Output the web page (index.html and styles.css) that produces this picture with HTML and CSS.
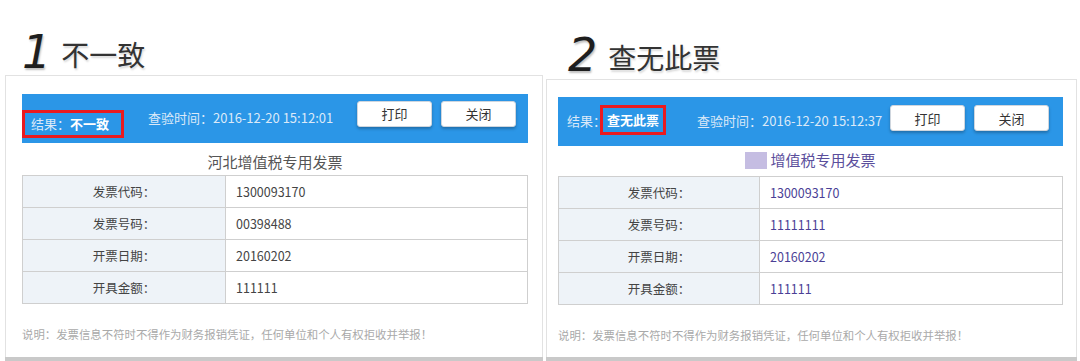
FILE: index.html
```html
<!DOCTYPE html>
<html lang="zh-CN">

<head>
    <meta charset="UTF-8" />
    <meta name="viewport" content="width=device-width, initial-scale=1.0" />
    <title>发票查验结果</title>
    <link rel="stylesheet" href="styles.css">
</head>

<body>
    <div class="page">
        <div class="panel panel-one">
            <div class="title">
                <span class="num">1</span>
                <span class="label">不一致</span>
            </div>
            <div class="card">
                <div class="bar">
                    <div class="result boxed">结果：<b>不一致</b></div>
                    <div class="time">查验时间：2016-12-20 15:12:01</div>
                    <div class="buttons">
                        <button class="btn">打印</button>
                        <button class="btn">关闭</button>
                    </div>
                </div>
                <div class="subtitle">河北增值税专用发票</div>
                <table class="info">
                    <tr><td class="key">发票代码：</td><td>1300093170</td></tr>
                    <tr><td class="key">发票号码：</td><td>00398488</td></tr>
                    <tr><td class="key">开票日期：</td><td>20160202</td></tr>
                    <tr><td class="key">开具金额：</td><td>111111</td></tr>
                </table>
                <p class="note">说明：发票信息不符时不得作为财务报销凭证，任何单位和个人有权拒收并举报！</p>
            </div>
        </div>

        <div class="panel panel-two">
            <div class="title">
                <span class="num">2</span>
                <span class="label">查无此票</span>
            </div>
            <div class="card">
                <div class="bar">
                    <div class="result">结果：<b class="boxed">查无此票</b></div>
                    <div class="time">查验时间：2016-12-20 15:12:37</div>
                    <div class="buttons">
                        <button class="btn">打印</button>
                        <button class="btn">关闭</button>
                    </div>
                </div>
                <div class="subtitle"><span class="mask"></span>增值税专用发票</div>
                <table class="info">
                    <tr><td class="key">发票代码：</td><td>1300093170</td></tr>
                    <tr><td class="key">发票号码：</td><td>11111111</td></tr>
                    <tr><td class="key">开票日期：</td><td>20160202</td></tr>
                    <tr><td class="key">开具金额：</td><td>111111</td></tr>
                </table>
                <p class="note">说明：发票信息不符时不得作为财务报销凭证，任何单位和个人有权拒收并举报！</p>
            </div>
        </div>
    </div>
</body>

</html>
```

FILE: styles.css
```css
body {
    font-family: 'Noto Sans CJK SC', 'Liberation Sans', sans-serif;
    background-color: #ffffff;
    margin: 0;
    padding: 0;
    color: #333;
}

.page {
    display: flex;
    height: 361px;
    overflow: hidden;
}

.panel {
    display: flex;
    flex-direction: column;
}

.panel-one {
    width: 538px;
    margin-left: 5px;
}

.panel-two {
    width: 531px;
    margin-left: 3px;
}

.title {
    display: flex;
    align-items: center;
    gap: 10px;
    height: 75px;
    padding-left: 17px;
    padding-top: 28px;
    box-sizing: border-box;
}

.panel-two .title {
    height: 79px;
    padding-left: 22px;
    padding-top: 30px;
    gap: 11px;
}

.title .num {
    font-family: 'DejaVu Sans', sans-serif;
    font-size: 46px;
    font-style: italic;
    color: #1e1e1e;
    line-height: 1;
    text-shadow: 1px 2px 2px rgba(0, 0, 0, 0.25);
}

.title .label {
    font-size: 28px;
    color: #333;
    line-height: 1;
    margin-top: 4px;
    text-shadow: 1px 2px 2px rgba(0, 0, 0, 0.15);
}

.card {
    flex: 1;
    background-color: white;
    border: 1px solid #e2e2e2;
    border-bottom: none;
    box-shadow: 0 4px 0 #c9c9c9;
    margin-bottom: 4px;
    padding: 18px 14px 0 16px;
}

.panel-two .card {
    padding: 17px 13px 0 11px;
}

.bar {
    display: flex;
    align-items: center;
    height: 49px;
    background-color: #2b96e7;
    padding-right: 12px;
    font-size: 13px;
    color: #dbe9f8;
}

.panel-two .bar {
    padding-left: 9px;
    padding-right: 14px;
}

.result b {
    color: white;
    font-weight: bold;
}

.panel-one .result {
    width: 90px;
    height: 22px;
    line-height: 22px;
    padding-left: 6px;
    margin-top: 11px;
    margin-right: 24px;
}

.boxed {
    border: 3px solid #ea1a1f;
}

.panel-two .result b {
    display: inline-block;
    width: 60px;
    height: 24px;
    line-height: 24px;
    text-align: center;
    margin-left: -6px;
    margin-top: -4px;
    vertical-align: middle;
}

.panel-two .time {
    margin-left: 31px;
}

.time {
    margin-top: -3px;
}

.buttons {
    display: flex;
    gap: 9px;
    margin-left: auto;
    margin-top: -10px;
}

.panel-two .buttons {
    margin-top: -7px;
}

.btn {
    width: 75px;
    height: 26px;
    background-color: white;
    border: 1px solid #cfd6de;
    border-radius: 3px;
    box-shadow: 0 2px 3px rgba(0, 0, 0, 0.25);
    font-family: inherit;
    font-size: 13px;
    color: #333;
    padding: 0;
}

.subtitle {
    height: 32px;
    padding-top: 8px;
    box-sizing: border-box;
    line-height: 22px;
    text-align: center;
    font-size: 15px;
    color: #555;
}

.panel-two .subtitle {
    height: 30px;
    padding-top: 3px;
    color: #5b4f9c;
}

.mask {
    display: inline-block;
    width: 22px;
    height: 17px;
    background-color: #c5bde2;
    vertical-align: -3px;
    margin-right: 3px;
}

.info {
    width: 100%;
    border-collapse: collapse;
    font-size: 12.5px;
}

.info td {
    height: 31px;
    padding: 0 10px;
    border: 1px solid #cfcfcf;
    color: #444;
}

.info .key {
    width: 182px;
    text-align: center;
    background-color: #eef3f8;
}

.panel-two .info td {
    height: 31px;
}

.panel-two .info td:last-child {
    color: #4b3f96;
}

.panel-two .info .key {
    width: 180px;
}

.note {
    margin: 22px 0 0;
    font-size: 11.4px;
    line-height: 16px;
    color: #a9a9a9;
}
```
